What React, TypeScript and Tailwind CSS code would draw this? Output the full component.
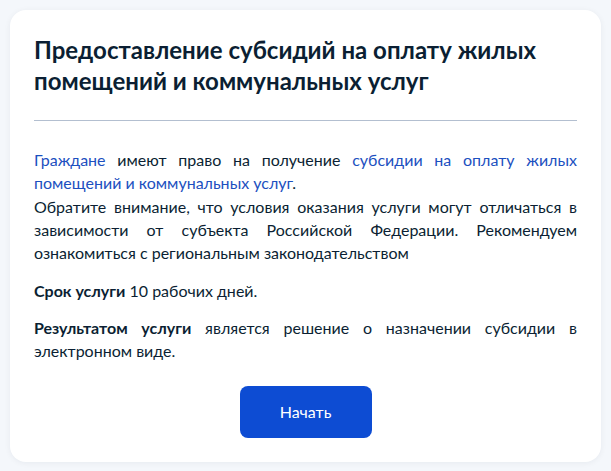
import React from 'react';

const App = () => {
  return (
    <div className="min-h-screen bg-[#f4f7fb] p-[10px] font-['Lato','Noto_Sans',sans-serif] text-[#0b1f33]">
      <div className="rounded-2xl bg-white px-6 pt-6 pb-6 shadow-[0_1px_6px_rgba(11,31,51,0.06)]">
        <h1 className="text-[24px] font-bold leading-[31px]">
          Предоставление субсидий на оплату жилых помещений и коммунальных услуг
        </h1>

        <div className="mt-[24px] h-px bg-[#b3bfd0]" />

        {/* описание услуги */}
        <div className="mt-[27px] text-[16px] leading-[23.25px]">
          <p className="text-justify">
            <a href="#" className="text-[#1c50c0]">Граждане</a> имеют право на получение{' '}
            <a href="#" className="text-[#1c50c0]">
              субсидии на оплату жилых помещений и коммунальных услуг
            </a>
            .
            <br />
            Обратите внимание, что условия оказания услуги могут отличаться в зависимости от
            субъекта Российской Федерации. Рекомендуем ознакомиться с региональным
            законодательством
          </p>
          <p className="mt-[15px]">
            <b>Срок услуги</b> 10 рабочих дней.
          </p>
          <p className="mt-[13px] text-justify">
            <b>Результатом услуги</b> является решение о назначении субсидии в электронном виде.
          </p>
        </div>

        <div className="mt-[24px] flex justify-center">
          <button className="h-[52px] w-[132px] rounded-lg bg-[#0d4cd3] text-[16px] text-white">
            Начать
          </button>
        </div>
      </div>
    </div>
  );
};

export default App;
